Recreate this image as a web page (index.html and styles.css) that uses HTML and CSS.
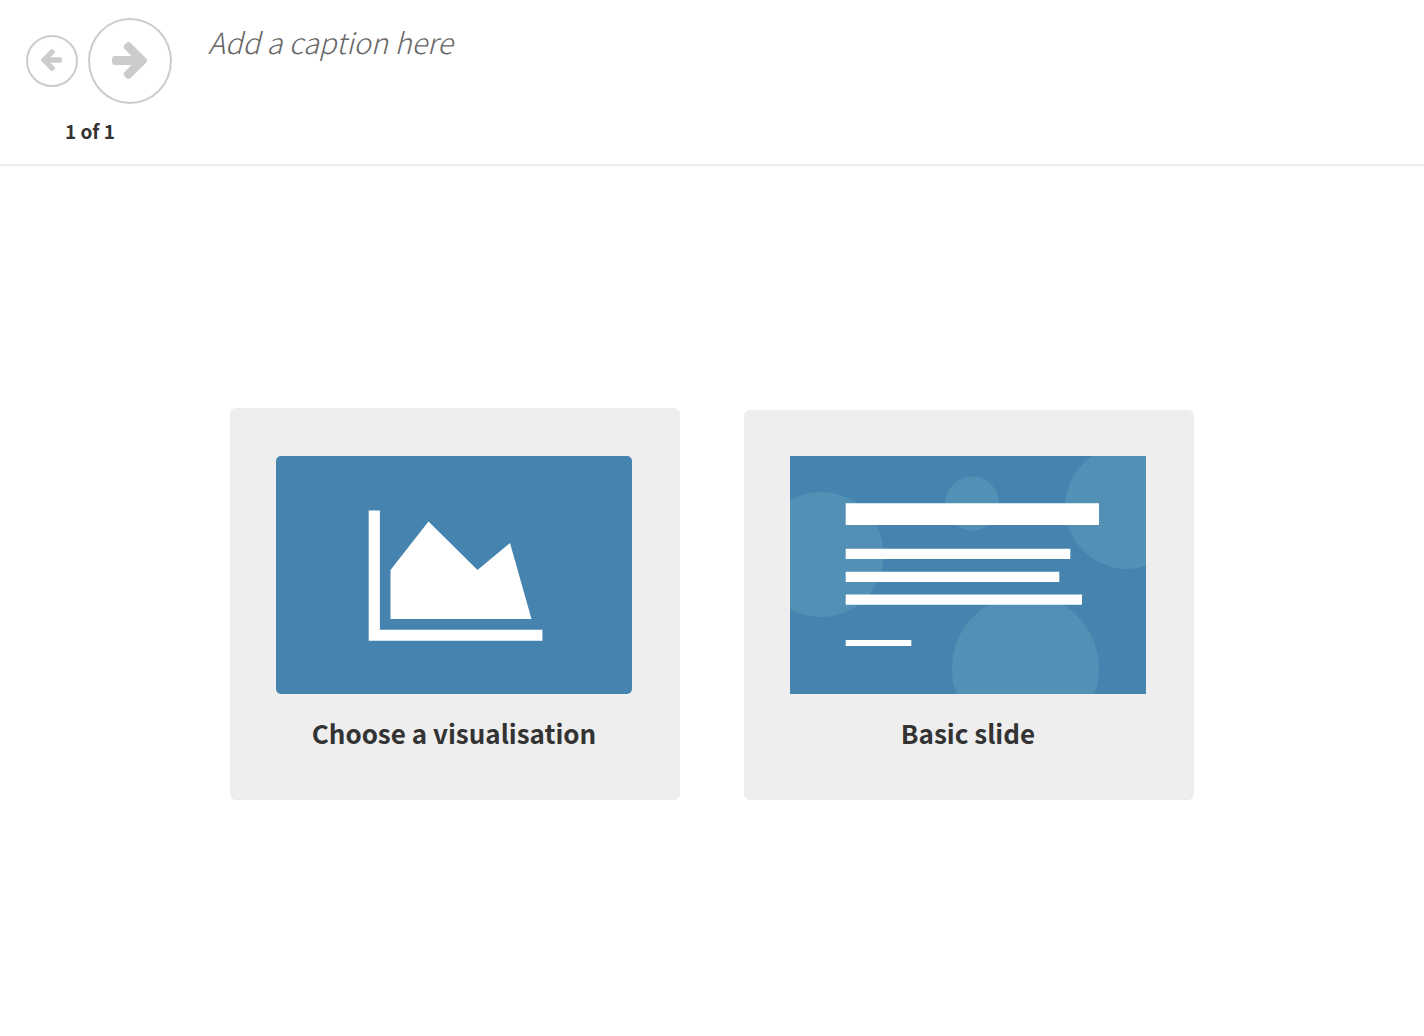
FILE: index.html
```
<!DOCTYPE html>
<html lang="en">
<head>
    <meta charset="UTF-8">
    <meta name="viewport" content="width=device-width, initial-scale=1.0">
    <title>Story editor</title>
    <link rel="stylesheet" href="styles.css">
</head>
<body>
    <header class="story-header">
        <nav class="story-nav">
            <div class="nav-buttons">
                <button type="button" class="nav-btn prev" aria-label="Previous slide">
                    <svg viewBox="128 181 1472 1558" aria-hidden="true">
                        <path transform="translate(1728 0) scale(-1 1)" d="M1600 960q0 54-37 91l-651 651q-39 37-91 37-51 0-90-37l-75-75q-38-38-38-91t38-91l293-293h-704q-52 0-84.5-37.5t-32.5-90.5v-128q0-53 32.5-90.5t84.5-37.5h704l-293-294q-38-36-38-90t38-90l75-75q38-38 90-38 53 0 91 38l651 651q37 35 37 90z"/>
                    </svg>
                </button>
                <button type="button" class="nav-btn next" aria-label="Next slide">
                    <svg viewBox="128 181 1472 1558" aria-hidden="true">
                        <path d="M1600 960q0 54-37 91l-651 651q-39 37-91 37-51 0-90-37l-75-75q-38-38-38-91t38-91l293-293h-704q-52 0-84.5-37.5t-32.5-90.5v-128q0-53 32.5-90.5t84.5-37.5h704l-293-294q-38-36-38-90t38-90l75-75q38-38 90-38 53 0 91 38l651 651q37 35 37 90z"/>
                    </svg>
                </button>
            </div>
            <div class="slide-count">1 of 1</div>
        </nav>
        <input type="text" class="caption" aria-label="Caption" placeholder="Add a caption here">
    </header>
    <main class="slide-picker">
        <button type="button" class="card card-vis">
            <svg class="thumb" viewBox="0 0 356 238" aria-hidden="true">
                <rect class="thumb-bg" width="356" height="238" rx="5"/>
                <path class="thumb-fg" d="M92.7 54.5h11.2v119.3h162.5v11H92.7z"/>
                <path class="thumb-fg" d="M114.5 114l38-48.5 49 48.5 32.5-27 21.5 76h-141z"/>
            </svg>
            <span class="card-label">Choose a visualisation</span>
        </button>
        <button type="button" class="card">
            <svg class="thumb" viewBox="0 0 356 238" aria-hidden="true">
                <rect class="thumb-bg" width="356" height="238"/>
                <circle class="bubble" cx="31.2" cy="98.5" r="62.5"/>
                <circle class="bubble" cx="182.3" cy="47.5" r="27"/>
                <circle class="bubble" cx="337.3" cy="51" r="62"/>
                <circle class="bubble" cx="235.5" cy="212.3" r="73.5"/>
                <path class="thumb-fg" d="M55.7 47.3H309V69H55.7zM55.7 92.7H280.3V103H55.7zM55.7 115.7H269.3V126H55.7zM55.7 138.5H292V148.7H55.7zM55.7 184H121.3V190H55.7z"/>
            </svg>
            <span class="card-label">Basic slide</span>
        </button>
    </main>
</body>
</html>
```
FILE: styles.css
```
* {
    box-sizing: border-box;
}
body {
    font-family: "Source Sans Pro", "Noto Sans CJK SC", sans-serif;
    color: #333;
    background: #fff;
    min-height: 100vh;
    margin: 0;
    display: flex;
    flex-direction: column;
}
button, input {
    font-family: inherit;
    color: inherit;
}

/* Header */
.story-header {
    display: flex;
    align-items: flex-start;
    padding: 18px 0;
    border-bottom: 2px solid #eee;
}
.story-nav {
    flex: none;
    width: 180px;
}
.nav-buttons {
    display: flex;
    align-items: center;
    justify-content: flex-end;
    gap: 10px;
    padding-right: 8px;
}
.nav-btn {
    display: flex;
    align-items: center;
    justify-content: center;
    padding: 0 2px 2px 0;
    background: none;
    border: 2px solid #ccc;
    border-radius: 50%;
    cursor: pointer;
}
.nav-btn svg {
    fill: #ccc;
}
.prev {
    width: 52px;
    height: 52px;
}
.prev svg {
    width: 21px;
    height: 22px;
}
.next {
    width: 84px;
    height: 86px;
}
.next svg {
    width: 35px;
    height: 37px;
}
.slide-count {
    margin-top: 12px;
    font-size: 19px;
    font-weight: bold;
    line-height: 30px;
    text-align: center;
}
.caption {
    flex: 1;
    min-width: 0;
    height: 46px;
    padding: 0 28px;
    border: none;
    outline: none;
    background: none;
    font-size: 29px;
    font-weight: 300;
    font-style: italic;
}
.caption::placeholder {
    color: #666;
    opacity: 1;
}

/* Slide type cards */
.slide-picker {
    flex: 1;
    display: flex;
    flex-wrap: wrap;
    align-content: center;
    align-items: flex-end;
    justify-content: center;
    gap: 64px;
    padding-top: 6px;
}
.card {
    width: 450px;
    padding: 46px 48px 48px 46px;
    border: none;
    border-radius: 6px;
    background: #eee;
    cursor: pointer;
}
.card-vis {
    padding-top: 48px;
}
.thumb {
    display: block;
    width: 100%;
}
.thumb-bg {
    fill: #4684af;
}
.thumb-fg {
    fill: #fff;
}
.bubble {
    fill: #5390b6;
}
.card-label {
    display: block;
    margin-top: 20px;
    font-size: 26px;
    font-weight: bold;
    line-height: 38px;
}
```
